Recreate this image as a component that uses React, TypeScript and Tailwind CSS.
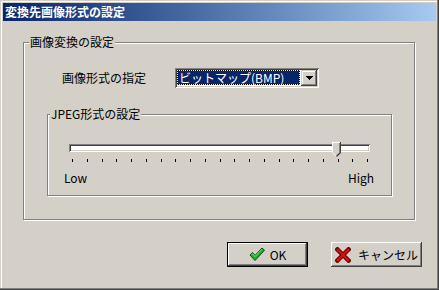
import React from "react";

const font = "font-['Noto_Sans_CJK_JP','Noto_Sans',sans-serif]";

function CheckIcon() {
  return (
    <svg width="16" height="15" viewBox="0 0 16 15">
      <polygon points="1,8 3.5,5.5 6,8.5 13,1 15.5,3.2 6,13.5" fill="#1fb01f" stroke="#0a4a20" strokeWidth="1" strokeLinejoin="round" />
      <polyline points="2.5,7.8 3.5,6.8 6,9.6 13,2.2" fill="none" stroke="#7fe07f" strokeWidth="1" />
    </svg>
  );
}

function XIcon() {
  return (
    <svg width="16" height="16" viewBox="0 0 16 16">
      <path d="M2.5 2.5 L13.5 13.5 M13.5 2.5 L2.5 13.5" stroke="#6a0000" strokeWidth="4.5" strokeLinecap="square" />
      <path d="M2.8 2.8 L13.2 13.2 M13.2 2.8 L2.8 13.2" stroke="#d81010" strokeWidth="2.2" strokeLinecap="square" />
    </svg>
  );
}

function Thumb() {
  return (
    <svg width="9" height="15" viewBox="0 0 9 15" shapeRendering="crispEdges" className="absolute left-[263px] top-[-2px]">
      <polygon points="0,0 9,0 9,10 4.5,15 0,10" fill="#d4d0c8" />
      <path d="M0.5 10 V0.5 H8" stroke="#ffffff" strokeWidth="1" fill="none" />
      <path d="M0.5 10.5 L4.5 14.5" stroke="#ffffff" strokeWidth="1" fill="none" shapeRendering="auto" />
      <path d="M8.5 0 V10.5" stroke="#404040" strokeWidth="1" fill="none" />
      <path d="M8.5 10.5 L4.5 14.5" stroke="#404040" strokeWidth="1.2" fill="none" shapeRendering="auto" />
      <path d="M7.5 1 V10.2" stroke="#808080" strokeWidth="1" fill="none" />
      <path d="M7.5 10.3 L4.5 13.3" stroke="#808080" strokeWidth="1" fill="none" shapeRendering="auto" />
    </svg>
  );
}

function Ticks() {
  const xs = Array.from({ length: 21 }, (_, i) => Math.round(3 + i * 14.75));
  return (
    <svg width="301" height="3" shapeRendering="crispEdges" className="block">
      {xs.map((x) => (
        <rect key={x} x={x} y={0} width={1} height={3} fill="#000" />
      ))}
    </svg>
  );
}

export default function App() {
  return (
    <div
      className={`${font} w-[439px] h-[290px] bg-[#d4d0c8] p-[3px] text-[12px] leading-[14px] text-black shadow-[inset_-1px_-1px_#404040,inset_-2px_-2px_#808080,inset_1px_1px_#d4d0c8,inset_2px_2px_#ffffff]`}
    >
      <div className="h-[18px] flex items-center pl-[2px] bg-gradient-to-r from-[#0a246a] to-[#a6caf0] text-white font-bold">
        変換先画像形式の設定
      </div>

      <fieldset className="ml-[20px] mt-[14px] w-[392px] h-[185px] border border-[#808080] shadow-[inset_1px_1px_#ffffff,1px_1px_#ffffff]">
        <legend className="ml-[5px] px-[1px] bg-[#d4d0c8] leading-[14px]">画像変換の設定</legend>

        <div className="mt-[19px] ml-[38px] flex items-center">
          <div className="w-[113px]">画像形式の指定</div>
          <div className="w-[144px] h-[20px] bg-white p-[2px] flex shadow-[inset_1px_1px_#808080,inset_-1px_-1px_#ffffff,inset_2px_2px_#404040,inset_-2px_-2px_#d4d0c8]">
            <div className="flex-1 mr-[1px] mb-[1px] bg-black border border-dotted border-[#ffff00]">
              <div className="h-full flex items-center bg-[#0a246a] text-white pl-[1px] whitespace-nowrap">
                ビットマップ(BMP)
              </div>
            </div>
            <div className="w-[16px] h-[16px] bg-[#d4d0c8] flex items-center justify-center shadow-[inset_-1px_-1px_#404040,inset_1px_1px_#d4d0c8,inset_-2px_-2px_#808080,inset_2px_2px_#ffffff]">
              <svg width="7" height="4" viewBox="0 0 7 4" shapeRendering="crispEdges">
                <polygon points="0,0 7,0 3.5,4" fill="#000" />
              </svg>
            </div>
          </div>
        </div>

        <fieldset className="mt-[19px] ml-[23px] w-[345px] h-[89px] border border-[#808080] shadow-[inset_1px_1px_#ffffff,1px_1px_#ffffff]">
          <legend className="ml-[2px] px-[1px] bg-[#d4d0c8] leading-[14px]">JPEG形式の設定</legend>

          <div className="relative mt-[23px] ml-[21px] w-[301px] h-[8px] bg-white shadow-[inset_1px_1px_#808080,inset_-1px_-1px_#ffffff,inset_2px_2px_#404040,inset_-2px_-2px_#d4d0c8]">
            <Thumb />
          </div>
          <div className="mt-[7px] ml-[21px]">
            <Ticks />
          </div>
          <div className="mt-[9px] ml-[16px] w-[310px] flex justify-between">
            <span>Low</span>
            <span>High</span>
          </div>
        </fieldset>
      </fieldset>

      <div className="mt-[22px] pr-[14px] flex justify-end gap-[23px]">
        <button className="w-[81px] h-[25px] border border-black bg-[#d4d0c8] flex items-center justify-center gap-[5px] shadow-[inset_-1px_-1px_#404040,inset_1px_1px_#ffffff,inset_-2px_-2px_#808080]">
          <CheckIcon />
          <span>OK</span>
        </button>
        <button className="w-[91px] h-[25px] bg-[#d4d0c8] flex items-center justify-center gap-[7px] shadow-[inset_-1px_-1px_#404040,inset_1px_1px_#ffffff,inset_-2px_-2px_#808080,inset_2px_2px_#d4d0c8]">
          <XIcon />
          <span>キャンセル</span>
        </button>
      </div>
    </div>
  );
}
